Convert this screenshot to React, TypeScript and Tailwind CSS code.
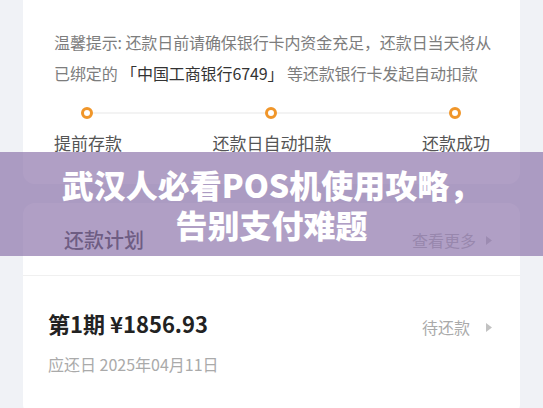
import React from 'react'

const cjk = { fontFamily: '"Noto Sans CJK SC", "Noto Sans", sans-serif' }

function Caret() {
  return (
    <svg width="6" height="9" viewBox="0 0 6 9" className="shrink-0">
      <polygon points="0,0 6,4.5 0,9" fill="#c2c2c2" />
    </svg>
  )
}

function Dot() {
  return <div className="h-3 w-3 shrink-0 rounded-full border-[3px] border-[#f0962a] bg-white" />
}

export default function App() {
  return (
    <div className="relative h-[408px] w-[543px] overflow-hidden bg-[#f0f2f6]" style={cjk}>
      {/* Repayment tips card */}
      <div className="mx-[23px] rounded-b-xl bg-white pb-[29px] pl-[31px] pr-[30px] pt-[27px]">
        <p className="whitespace-nowrap text-[16px] leading-[31px] tracking-[-0.1px] text-[#7d7d7d]">
          温馨提示: 还款日前请确保银行卡内资金充足，还款日当天将从
          <br />
          已绑定的 <span className="text-[#333333]">「中国工商银行6749」</span> 等还款银行卡发起自动扣款
        </p>

        <div className="mt-[18px] flex items-center pl-[27px] pr-[29px]">
          <Dot />
          <div className="h-[2px] flex-1 bg-[#f3f3f3]" />
          <Dot />
          <div className="h-[2px] flex-1 bg-[#f3f3f3]" />
          <Dot />
        </div>

        <div className="mt-[12px] flex justify-between text-[17px] leading-6 text-[#555555]">
          <span>提前存款</span>
          <span>还款日自动扣款</span>
          <span>还款成功</span>
        </div>
      </div>

      {/* Repayment plan card */}
      <div className="mx-[23px] mt-[19px] rounded-xl bg-white">
        <div className="flex items-center justify-between pb-[21px] pl-[41px] pr-[28px] pt-[23px]">
          <span className="text-[20px] font-medium leading-7 text-[#333333]">还款计划</span>
          <div className="flex items-center gap-[10px] text-[16px] text-[#b3b3b3]">
            查看更多
            <Caret />
          </div>
        </div>
        <div className="h-px bg-[#f0f0f0]" />
        <div className="flex items-start justify-between pb-10 pl-[25px] pr-[28px] pt-[32px]">
          <div>
            <p className="text-[22px] font-semibold leading-[30px] text-[#222222]">第1期 ¥1856.93</p>
            <p className="mt-[14px] text-[16px] leading-6 text-[#aaaaaa]">应还日 2025年04月11日</p>
          </div>
          <div className="mt-[7px] flex items-center gap-[16px] text-[16px] leading-6 text-[#aaaaaa]">
            待还款
            <Caret />
          </div>
        </div>
      </div>

      {/* Title banner over the page */}
      <div className="absolute left-0 right-0 top-[152px] flex h-[104px] flex-col items-center justify-center bg-[#8a72aa]/[0.68] text-center text-[32px] font-black leading-[40px] text-white">
        <span>武汉人必看POS机使用攻略，</span>
        <span>告别支付难题</span>
      </div>
    </div>
  )
}
